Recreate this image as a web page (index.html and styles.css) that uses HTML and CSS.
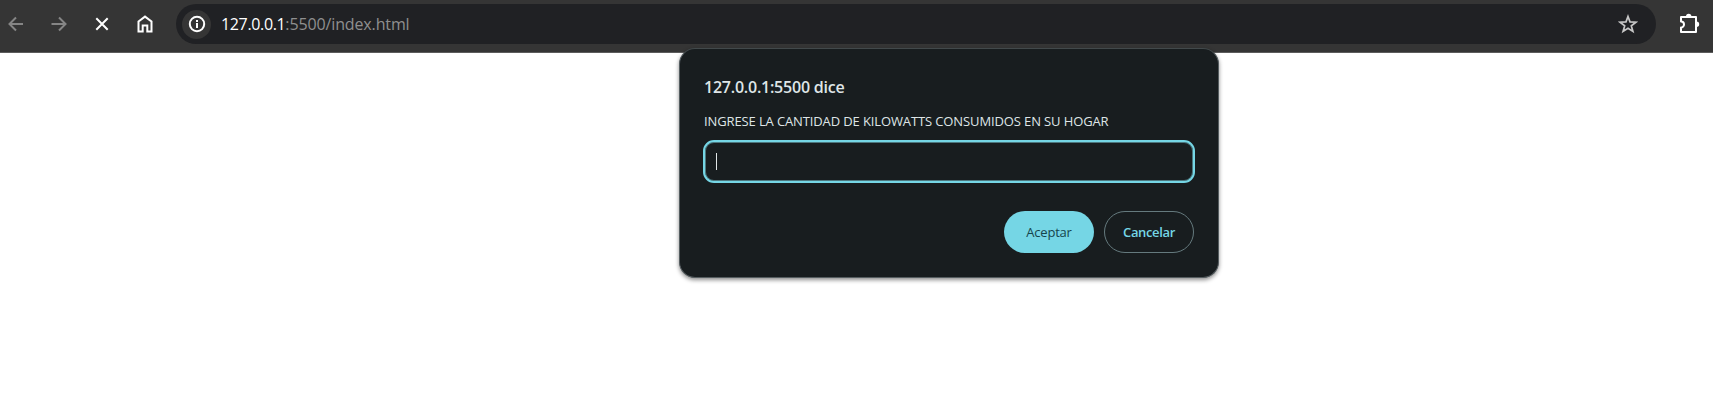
FILE: index.html
```html
<!DOCTYPE html>
<html lang="es">
<head>
<meta charset="utf-8">
<title>127.0.0.1:5500/index.html</title>
<link rel="stylesheet" href="styles.css">
</head>
<body>
<header class="toolbar">
  <nav class="nav">
    <svg class="icon dim" viewBox="0 0 20 20"><path d="M17 10H4M10 3.500L3.500 10l6.500 6.500"/></svg>
    <svg class="icon dim" viewBox="0 0 20 20"><path d="M2.500 10H16M10 3.500l6.500 6.500-6.500 6.500"/></svg>
    <svg class="icon" viewBox="0 0 20 20"><path d="M4.300 4.300l11.400 11.400M15.700 4.300L4.300 15.700"/></svg>
    <svg class="icon" viewBox="0 0 20 20"><path d="M3.500 7.500L10 2.600l6.500 4.900v10h-4.200v-6H7.700v6H3.500z"/></svg>
  </nav>
  <div class="omnibox">
    <span class="site-info"><svg class="icon" viewBox="0 0 20 20"><circle cx="10" cy="10" r="7.200"/><path d="M10 9v5M10 6v2"/></svg></span>
    <span class="url"><span class="host">127.0.0.1</span><span class="path">:5500/index.html</span></span>
    <svg class="icon star" viewBox="0 0 20 20"><path d="M10 2.500l2 5.400 5.900.3-4.600 3.600 1.600 5.600-4.900-3.200-4.900 3.200 1.600-5.600-4.600-3.600 5.900-.3z"/></svg>
  </div>
  <svg class="icon extensions" viewBox="0 0 22 22"><path stroke-linejoin="round" d="M3 5h15v15H3v-4.500a3 3 0 0 0 0-6z"/><path class="solid" d="M8 4.500a2.700 2.700 0 0 1 5.400 0zM18.500 9.500a2.700 2.700 0 0 1 0 5.400z"/></svg>
</header>
<main class="page">
  <section class="dialog" role="dialog" aria-labelledby="title">
    <h1 class="title" id="title">127.0.0.1:5500 dice</h1>
    <p class="message">INGRESE LA CANTIDAD DE KILOWATTS CONSUMIDOS EN SU HOGAR</p>
    <div class="field"><span class="caret"></span></div>
    <div class="actions">
      <button class="button primary"><span>Aceptar</span></button>
      <button class="button secondary"><span>Cancelar</span></button>
    </div>
  </section>
</main>
</body>
</html>
```
FILE: styles.css
```css
* { box-sizing: border-box; }
body { margin: 0; height: 419px; overflow: hidden; background: #fff; font-family: "Open Sans", "Noto Sans", sans-serif; }
.toolbar { display: flex; align-items: flex-start; height: 53px; padding: 4px 0 0 6px; background: #353535; border-bottom: 1px solid #5c5c5c; }
.nav { display: flex; gap: 23px; width: 170px; padding-top: 10px; }
.icon { display: block; flex: none; width: 20px; height: 20px; fill: none; stroke: #fff; stroke-width: 2; }
.dim { stroke: #858585; }
.omnibox { display: flex; align-items: center; width: 1480px; height: 40px; padding: 0 18px 0 6px; border-radius: 20px; background: #202124; }
.site-info { display: grid; place-items: center; width: 29px; height: 29px; border-radius: 50%; background: #353535; }
.url { margin: -1px 0 0 10px; font-size: 16px; line-height: 24px; white-space: nowrap; letter-spacing: -0.35px; }
.host { color: #fff; }
.path { color: #8f8f8f; letter-spacing: -0.13px; }
.star { margin-left: auto; stroke: #c7c7c7; stroke-width: 1.7; }
.extensions { width: 22px; height: 22px; margin: 8px 0 0 22px; }
.solid { fill: #fff; stroke: none; }
.page { display: flex; padding-left: 679px; }
.dialog { position: relative; width: 540px; height: 230px; margin-top: -5px; padding: 25px 23px 0 23px; border: 1px solid #555d60; border-top-color: #42494b; border-radius: 16px; background: #181d1f; box-shadow: 0 2px 4px rgba(0, 0, 0, .45); }
.title { margin: 0 0 0 1px; color: #dfe5e7; font-size: 16px; font-weight: 600; line-height: 26px; white-space: nowrap; letter-spacing: -0.23px; }
.message { margin: 11px 0 0 1px; color: #dfe5e7; font-size: 13px; line-height: 20px; white-space: nowrap; letter-spacing: -0.12px; }
.field { width: 492px; height: 43px; margin-top: 9px; padding: 11px; border: 2px solid #75d6e5; border-radius: 11px; box-shadow: inset 0 0 0 1px #4d777e; }
.caret { display: block; width: 1px; height: 17px; background: #e0e5e6; }
.actions { display: flex; justify-content: flex-end; gap: 10px; margin: 28px 1px 0 0; }
.button { width: 90px; height: 42px; padding: 0; border: 0; border-radius: 21px; font: 500 13px/20px "Open Sans", "Noto Sans", sans-serif; letter-spacing: -0.2px; }
.primary { background: #75d6e5; color: #15454c; }
.secondary { border: 1px solid #657a7e; background: transparent; color: #75d6e5; font-weight: 600; letter-spacing: -0.35px; }
```
